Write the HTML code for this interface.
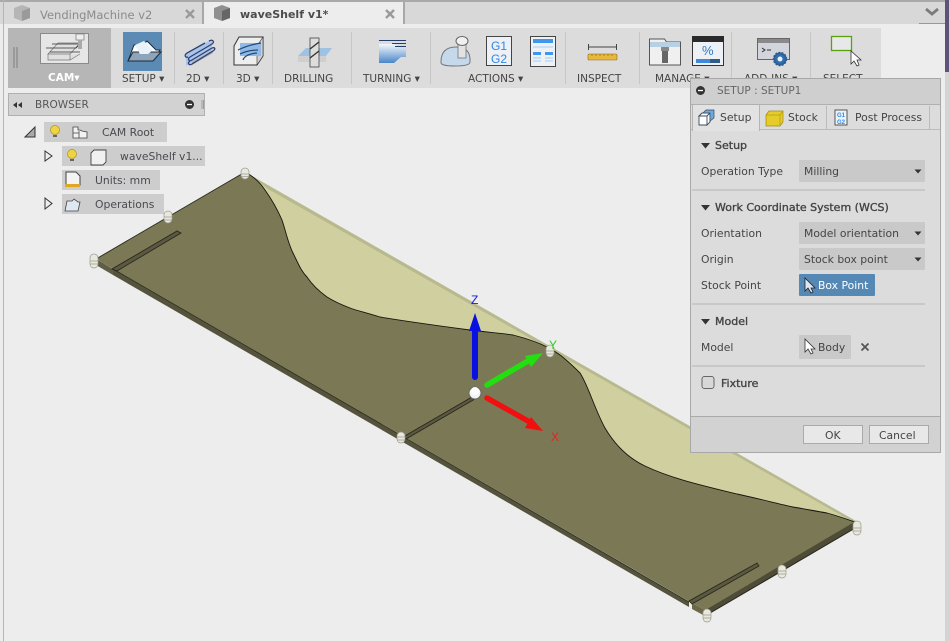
<!DOCTYPE html>
<html><head><meta charset="utf-8"><style>
html,body{margin:0;padding:0;background:#ededed}
#r{position:relative;width:949px;height:641px;overflow:hidden;background:#ededed;font-family:"DejaVu Sans","Liberation Sans",sans-serif;font-size:10.8px;color:#4a4a50}
#r div,#r span.t{position:absolute;white-space:nowrap}
.t{line-height:14px}
.lab{font-size:10.5px;color:#444;text-align:center}
.b{font-weight:bold}
.h{font-size:11px;color:#444;-webkit-text-stroke:.35px #444}
.sel{background:#c9c9c9;height:22px;left:799px;width:126px;border-radius:1px}
.sep{background:#c8c8c8;height:2px;left:692px;width:233px}
.tv{background:#cdcdcd;height:20px}
.tb{width:1px;top:32px;height:52px;background:#c6c6c6}
svg{position:absolute;left:0;top:0}
</style></head><body><div id="r">
<!-- tab bar -->
<div style="left:0;top:0;width:949px;height:2px;background:#a9a9a9"></div>
<div style="left:0;top:2px;width:945px;height:22px;background:#d8d8d8"></div>
<div style="left:204px;top:2px;width:199px;height:22px;background:#ededed"></div>
<div style="left:202px;top:2px;width:2px;height:22px;background:#a8a8a8"></div>
<div style="left:403px;top:2px;width:2px;height:22px;background:#a8a8a8"></div>
<div style="left:3px;top:0;width:1px;height:641px;background:#b5b5b5"></div>
<div style="left:945px;top:0;width:4px;height:72px;background:#5f5278"></div>
<div style="left:945px;top:72px;width:4px;height:569px;background:#d4d4d4"></div>
<div style="left:919px;top:23px;width:26px;height:1px;background:#999"></div>
<span class="t" style="left:40px;top:8px;font-size:11.5px;color:#8b8b8b">VendingMachine v2</span>
<span class="t b" style="left:240px;top:8px;font-size:11px;color:#4c4c4c">waveShelf v1*</span>
<!-- toolbar -->
<div style="left:8px;top:28px;width:873px;height:60px;background:#dcdcdc"></div>
<div style="left:8px;top:28px;width:103px;height:60px;background:#b6b6b6"></div>
<div style="left:123px;top:32px;width:39px;height:39px;background:#5b8ab5"></div>
<div class="tb" style="left:174px"></div><div class="tb" style="left:223px"></div><div class="tb" style="left:272px"></div>
<div class="tb" style="left:351px"></div><div class="tb" style="left:430px"></div><div class="tb" style="left:565px"></div>
<div class="tb" style="left:639px"></div><div class="tb" style="left:731px"></div><div class="tb" style="left:810px"></div>
<span class="t b" style="left:48px;top:71px;font-size:10.5px;color:#fff">CAM▾</span>
<span class="t lab" style="left:122px;top:72px">SETUP ▾</span>
<span class="t lab" style="left:186px;top:72px">2D ▾</span>
<span class="t lab" style="left:236px;top:72px">3D ▾</span>
<span class="t lab" style="left:284px;top:72px">DRILLING</span>
<span class="t lab" style="left:363px;top:72px">TURNING ▾</span>
<span class="t lab" style="left:468px;top:72px">ACTIONS ▾</span>
<span class="t lab" style="left:577px;top:72px">INSPECT</span>
<span class="t lab" style="left:655px;top:72px">MANAGE ▾</span>
<span class="t lab" style="left:744px;top:72px">ADD-INS ▾</span>
<span class="t lab" style="left:823px;top:72px">SELECT</span>
<!-- browser -->
<div style="left:8px;top:93px;width:197px;height:23px;background:#d2d2d2;border:1px solid #b0b0b0;box-sizing:border-box"></div>
<span class="t" style="left:35px;top:98px;font-size:10.5px;color:#555">BROWSER</span>
<div class="tv" style="left:44px;top:122px;width:123px"></div>
<div class="tv" style="left:62px;top:146px;width:143px"></div>
<div class="tv" style="left:62px;top:170px;width:98px"></div>
<div class="tv" style="left:62px;top:194px;width:102px"></div>
<span class="t" style="left:102px;top:126px;font-size:10.8px">CAM Root</span>
<span class="t" style="left:120px;top:150px;font-size:10.8px">waveShelf v1...</span>
<span class="t" style="left:95px;top:174px;font-size:10.8px">Units: mm</span>
<span class="t" style="left:95px;top:198px;font-size:10.8px">Operations</span>

<svg width="949" height="641" viewBox="0 0 949 641" fill="none">
<defs>
<linearGradient id="tg" x1="0" y1="0" x2="0" y2="1"><stop offset="0" stop-color="#f4f8fc"/><stop offset="1" stop-color="#4a86c8"/></linearGradient>
<linearGradient id="dg" x1="0" y1="0" x2="0" y2="1"><stop offset="0" stop-color="#f2f6fa"/><stop offset="1" stop-color="#a8c4e0"/></linearGradient>
</defs>
<!-- model -->
<path d="M245 172 L855 521 L705 609 L97 259 Z" fill="#cfcf9f"/>
<path d="M245 172 L856 521 L851 521 L268 189 Z" fill="#b9b98f"/>
<path d="M96 259 L245 172 Q257 178 265 190 Q275 204 282 220 C286 232 288 243 293 253 C298 263 301 271 307 277 C313 286 320 292 327 297 C335 302 342 305 350 308 C358 311 364 312 380 317 C410 322 440 326 470 330 C485 332 500 333 513 335 C525 338 537 342 547 347 C553 350 556 352 560 355 C568 361 574 367 580 373 C588 385 595 410 605 428 C615 445 628 458 645 466 C670 478 700 485 737 494 C760 499 775 503 793 507 C805 509 815 511 827 513 C838 516 846 519 855 522 L705 610 L692 603 Z" fill="#7b7955"/>
<path d="M245 172 Q257 178 265 190 Q275 204 282 220 C286 232 288 243 293 253 C298 263 301 271 307 277 C313 286 320 292 327 297 C335 302 342 305 350 308 C358 311 364 312 380 317 C410 322 440 326 470 330 C485 332 500 333 513 335 C525 338 537 342 547 347 C553 350 556 352 560 355 C568 361 574 367 580 373 C588 385 595 410 605 428 C615 445 628 458 645 466 C670 478 700 485 737 494 C760 499 775 503 793 507 C805 509 815 511 827 513 C838 516 846 519 855 522" stroke="#15150e" stroke-width=".9"/>
<path d="M245 172 L96 259" stroke="#2a2a1c" stroke-width=".9"/>
<!-- front thickness -->
<path d="M96 259 L96 265 L113 275 L113 269 Z" fill="#5f5d44"/>
<path d="M113 269 L113 275 L689 607 L689 602 Z" fill="#55533b"/>
<path d="M113 269 L689 602" stroke="#2b2a1d" stroke-width=".8"/>
<path d="M692 603 L692 609 L705 616 L705 610 Z" fill="#6a6848"/>
<path d="M705 616 L857 527 L856 521 L705 610 Z" fill="#4e4c36"/>
<path d="M705 616 L857 527" stroke="#26251a" stroke-width="1"/>
<path d="M112 269 L177 231 L181 233 L117 271 Z" fill="#5a5840" stroke="#25241a" stroke-width=".8"/>
<path d="M403 437 L472 397 L475 399 L406 439 Z" fill="#5a5840" stroke="#25241a" stroke-width=".8"/>
<path d="M689 601 L757 563 L759 566 L692 604 Z" fill="#5a5840" stroke="#25241a" stroke-width=".8"/>
<!-- pegs -->
<g fill="#e8e8dc" stroke="#9a9a90" stroke-width=".7">
<g transform="translate(245,173)"><rect x="-4" y="-5" width="8" height="11" rx="4"/><path d="M-4 1h8M-4 3.500h8"/></g>
<g transform="translate(168,217)"><rect x="-4" y="-6" width="8" height="12" rx="4"/><path d="M-4 0h8M-4 3h8"/></g>
<g transform="translate(94,261)"><rect x="-4" y="-7" width="8" height="14" rx="4"/><path d="M-4 0h8M-4 3h8"/></g>
<g transform="translate(401,437)"><rect x="-4" y="-5" width="8" height="11" rx="4"/><path d="M-4 0h8M-4 3h8"/></g>
<g transform="translate(550,351)"><rect x="-4" y="-6" width="8" height="12" rx="4"/><path d="M-4 0h8M-4 3h8"/></g>
<g transform="translate(782,571)"><rect x="-4" y="-6" width="8" height="13" rx="4"/><path d="M-4 0h8M-4 3h8"/></g>
<g transform="translate(707,615)"><rect x="-4" y="-6" width="8" height="13" rx="4"/><path d="M-4 0h8M-4 3h8"/></g>
<g transform="translate(857,527)"><rect x="-4" y="-6" width="8" height="14" rx="4"/><path d="M-4 1h8M-4 4h8"/></g>
</g>
<!-- triad -->
<path d="M475 377 V330" stroke="#0a10e0" stroke-width="6" stroke-linecap="round"/>
<path d="M475 313 L481 331 H469 Z" fill="#0a10e0"/>
<path d="M487 385 L528 361" stroke="#22e010" stroke-width="5.500" stroke-linecap="round"/>
<path d="M543 353 L525 356 L531 367 Z" fill="#22e010"/>
<path d="M487 398 L528 421" stroke="#f01010" stroke-width="5.500" stroke-linecap="round"/>
<path d="M543 431 L531 417 L525 428 Z" fill="#f01010"/>
<circle cx="475" cy="393" r="6" fill="#f4f4f4" stroke="#666" stroke-width="1"/>
<circle cx="475" cy="391" r="4" fill="#fff"/>
<text x="471" y="304" font-family="Liberation Sans" font-size="12" fill="#1418e8">Z</text>
<text x="549" y="349" font-family="Liberation Sans" font-size="12" fill="#30d020">Y</text>
<text x="551" y="441" font-family="Liberation Sans" font-size="12" fill="#e82020">X</text>

<!-- tabs icons -->
<path d="M14 8l8-3 8 3v10l-8 3-8-3z" fill="#b5b5b5"/><path d="M22 11l8-3v10l-8 3z" fill="#9a9a9a"/>
<path d="M186 10l8 8M194 10l-8 8" stroke="#9a9a9a" stroke-width="2.400"/>
<path d="M214 8l8-3 8 3v10l-8 3-8-3z" fill="#8f8f8f"/><path d="M222 11l8-3v10l-8 3z" fill="#666"/>
<path d="M386 10l8 8M394 10l-8 8" stroke="#9a9a9a" stroke-width="2.400"/>
<path d="M926 9l6 5 6-5" stroke="#7c7c7c" stroke-width="2.800"/>
<!-- grip -->
<path d="M14 47v21M17 47v21" stroke="#888" stroke-width="1.200"/>
<!-- CAM icon -->
<rect x="40.500" y="33.500" width="48" height="30" fill="#e6e6e6" stroke="#8a8a8a"/>
<path d="M48 54l10-11h22l-10 11zM48 54v6h22l10-6M70 54v6" fill="#e0e0e0" stroke="#777" stroke-width=".7"/>
<path d="M46 48h30l3-3M52 44h28M50 52h30" stroke="#333" stroke-width=".8"/>
<rect x="76" y="34" width="8" height="6" fill="#eee" stroke="#777" stroke-width=".7"/><rect x="78" y="40" width="4" height="9" fill="#aaa"/>
<!-- setup icon -->
<path d="M128 61l6-16h9l4-4 9 9h4l-8 11z" fill="#fff" stroke="#1d2a3a"/>
<path d="M128 61l5-9h28l-8 9z" fill="#8ea4b8" stroke="#1d2a3a"/>
<path d="M135 45l9-4 9 9-5 4h-8z" fill="#e8f2fb"/>
<!-- 2D -->
<path d="M186 54l26-15v12l-26 15z" fill="#a9c6e6"/>
<path d="M192 62l21-12v3l-21 12z" fill="#aaa"/>
<path d="M209 41c4-2 6 1 3 3L190 57c-3 2-1 5 2 3l20-12" stroke="#2e3f78" stroke-width="1.300"/>
<path d="M205 43L187 53c-3 2-2 5 1 4" stroke="#2e3f78" stroke-width="1.300"/>
<path d="M212 48c3-1 4 1 1 3L192 64c-3 2-5-1-2-3" stroke="#2e3f78" stroke-width="1.300"/>
<!-- 3D -->
<path d="M234 46l5-9h24v19l-6 9h-23z" fill="#eee" stroke="#333"/>
<path d="M257 46l6-9v19l-6 9z" fill="#d0d0d0" stroke="#333" stroke-width=".6"/>
<path d="M240 43h21v13h-21z" fill="#8fb9e6"/>
<path d="M238 50q10-5 23-7M240 54q8-4 18-4M243 60q2-6 14-7" stroke="#244878" stroke-width="1.200"/>
<!-- drilling -->
<path d="M298 56l8-8h26l-6 8z" fill="#9ec2e2"/><path d="M298 56h28v6h-28z" fill="#cfcfcf"/>
<rect x="310" y="38" width="9" height="29" fill="#ddd" stroke="#444" stroke-width=".8"/>
<path d="M310 49l9-7M310 58l9-7" stroke="#333" stroke-width="1.400"/>
<!-- turning -->
<path d="M379 44h15l7 4h5v9h-5l-7 6h-15z" fill="url(#tg)"/>
<path d="M379 40.500h27M392 43.500h14M395 46.500h11" stroke="#243e6e" stroke-width="1"/>
<!-- actions -->
<path d="M441 62q0-15 15-15t14 15q0 4-15 4t-14-4z" fill="#c5d8ec" stroke="#777"/>
<rect x="458" y="43" width="8" height="15" fill="#e2e2e2" stroke="#666" stroke-width=".7"/>
<ellipse cx="462" cy="41" rx="6" ry="4.500" fill="#f0f0f0" stroke="#666"/>
<rect x="486.500" y="36.500" width="25" height="29" fill="#edf1f5" stroke="#444"/>
<rect x="530.500" y="36.500" width="25" height="30" fill="#edf1f5" stroke="#444"/>
<path d="M533 39h20v4h-20zM533 52h8v3h-8zM545 52h8v3h-8z" fill="#3f97ec"/>
<path d="M533 47h20M533 58h8M545 58h8M533 61h8M545 61h8" stroke="#a5d0f2"/>
<text x="491" y="50" font-family="Liberation Sans" font-size="12" fill="#2f86e4">G1</text>
<text x="491" y="63" font-family="Liberation Sans" font-size="12" fill="#2f86e4">G2</text>
<!-- inspect -->
<path d="M588.500 44v6M616.500 44v6M589 47h28" stroke="#444" stroke-width="1"/>
<rect x="588" y="54" width="29" height="6" rx="1" fill="#e8b83c" stroke="#8a6d1f" stroke-width=".6"/>
<path d="M592 54v2M596 54v2M600 54v2M604 54v2M608 54v2M612 54v2" stroke="#8a6d1f" stroke-width=".7"/>
<!-- manage -->
<path d="M649.500 65v-26h15l2 3h14v23z" fill="#f0f0f0" stroke="#555"/>
<path d="M650 42h30v5h-30z" fill="#b8d0e4"/>
<rect x="661" y="47" width="8" height="4" fill="#888"/><rect x="662" y="51" width="6" height="12" fill="#666"/>
<rect x="692.500" y="36.500" width="31" height="29" fill="#edf1f5" stroke="#333"/>
<rect x="692" y="36" width="32" height="6" fill="#2a2a2a"/>
<path d="M696 59h14v4h-14z" fill="#3f89dc"/><path d="M710 59h10v4h-10z" fill="#2f5c88"/>
<text x="702" y="55" font-family="Liberation Sans" font-size="13" fill="#2f78c8">%</text>
<!-- add-ins -->
<rect x="757.500" y="38.500" width="32" height="21" fill="#d2d6dc" stroke="#666"/>
<rect x="758" y="39" width="31" height="4" fill="#8a8a8a"/>
<path d="M762 48l3 2-3 2M767 50h4" stroke="#333"/>
<circle cx="780" cy="59" r="6.500" fill="#2f5e92" stroke="#2f5e92" stroke-width="1.500" stroke-dasharray="2 1.200"/>
<circle cx="780" cy="59" r="5" fill="#2f6eb0"/><circle cx="780" cy="59" r="2.500" fill="#e8f0f8"/>
<!-- select -->
<rect x="831.500" y="36.500" width="20" height="14" stroke="#5aa010" stroke-width="1.300" fill="#e8e8e8"/>
<path d="M851 51v13l3-3 3 5 2-1-2-5h4z" fill="#fff" stroke="#333" stroke-width=".8"/>
<!-- browser icons -->
<path d="M13 105l4-3v6zM18 105l4-3v6z" fill="#333"/>
<circle cx="189.500" cy="104.500" r="4.500" fill="#333"/><path d="M187 104.500h5" stroke="#fff" stroke-width="1.300"/>
<path d="M202 100v9M203.500 100v9" stroke="#888" stroke-width=".7"/>
<path d="M25 137l10-10v10z" fill="#aaa" stroke="#333"/>
<path d="M45 151l7 5-7 5z" stroke="#333" fill="#eee"/>
<path d="M45 198l7 5.500-7 5.500z" stroke="#333" fill="#eee"/>
<g fill="#f0d340" stroke="#b09420" stroke-width=".7"><circle cx="55" cy="130" r="4.500"/><circle cx="72" cy="154" r="4.500"/></g>
<path d="M53 136h4M70 160h4" stroke="#666" stroke-width="2"/>
<path d="M73 138v-11h5v3h2l2 1 5 1v6z" fill="#f2f2f2" stroke="#444" stroke-width=".8"/><path d="M79 131v7M73 133h6" stroke="#444" stroke-width=".8"/>
<path d="M91 153l3-3h12v12l-3 3H91z" fill="#f0f0f0" stroke="#444" stroke-width=".9"/>
<path d="M66 172h10l4 4v9H66z" fill="#f4f4f4" stroke="#444"/><rect x="65" y="184" width="15" height="3" fill="#e0a820"/>
<path d="M65 211l2-10h5l2-2 4 3h2l-2 9z" fill="#dfe8f0" stroke="#444" stroke-width=".8"/>
</svg>

<!-- dialog -->
<div style="left:690px;top:78px;width:251px;height:375px;background:#dcdcdc;border:1px solid #a8a8a8;box-sizing:border-box"></div>
<div style="left:691px;top:79px;width:249px;height:25px;background:#cfcfcf"></div>
<div style="left:691px;top:104px;width:249px;height:1px;background:#b0b0b0"></div>
<div style="left:691px;top:129px;width:249px;height:1px;background:#bbb"></div>
<div style="left:692px;top:105px;width:68px;height:26px;background:#e2e2e2;border-left:1px solid #b5b5b5;border-right:1px solid #b5b5b5;box-sizing:border-box"></div>
<div style="left:826px;top:106px;width:1px;height:23px;background:#bbb"></div>
<div style="left:929px;top:106px;width:1px;height:23px;background:#bbb"></div>
<span class="t" style="left:717px;top:84px;font-size:10.500px;color:#666">SETUP : SETUP1</span>
<span class="t" style="left:720px;top:111px;color:#444">Setup</span>
<span class="t" style="left:788px;top:111px;color:#444">Stock</span>
<span class="t" style="left:855px;top:111px;color:#444">Post Process</span>
<span class="t h" style="left:715px;top:139px">Setup</span>
<span class="t" style="left:701px;top:165px;color:#444">Operation Type</span>
<div class="sel" style="top:160px"></div>
<span class="t" style="left:804px;top:165px;color:#444">Milling</span>
<div class="sep" style="top:189px"></div>
<span class="t h" style="left:715px;top:201px">Work Coordinate System (WCS)</span>
<span class="t" style="left:701px;top:227px;color:#444">Orientation</span>
<div class="sel" style="top:222px"></div>
<span class="t" style="left:804px;top:227px;color:#444">Model orientation</span>
<span class="t" style="left:701px;top:253px;color:#444">Origin</span>
<div class="sel" style="top:248px"></div>
<span class="t" style="left:804px;top:253px;color:#444">Stock box point</span>
<span class="t" style="left:701px;top:279px;color:#444">Stock Point</span>
<div style="left:799px;top:274px;width:76px;height:22px;background:#5588b5;border-radius:1px"></div>
<span class="t" style="left:818px;top:279px;color:#fff">Box Point</span>
<div class="sep" style="top:303px"></div>
<span class="t h" style="left:715px;top:315px">Model</span>
<span class="t" style="left:701px;top:341px;color:#444">Model</span>
<div style="left:799px;top:335px;width:52px;height:24px;background:#c9c9c9;border-radius:1px"></div>
<span class="t" style="left:818px;top:341px;color:#444">Body</span>
<div class="sep" style="top:365px"></div>
<span class="t h" style="left:721px;top:377px">Fixture</span>
<div style="left:691px;top:416px;width:249px;height:36px;background:#d2d2d2;border-top:1px solid #aaa;box-sizing:border-box"></div>
<div style="left:803px;top:425px;width:60px;height:19px;background:#e8e8e8;border:1px solid #aaa;box-sizing:border-box"></div>
<div style="left:869px;top:425px;width:60px;height:19px;background:#e8e8e8;border:1px solid #aaa;box-sizing:border-box"></div>
<span class="t" style="left:825px;top:429px;color:#444">OK</span>
<span class="t" style="left:879px;top:429px;color:#444">Cancel</span>
<svg width="949" height="641" viewBox="0 0 949 641" fill="none" style="z-index:5">
<circle cx="700.500" cy="90.500" r="4.500" fill="#333"/><path d="M698 90.500h5" stroke="#fff" stroke-width="1.300"/>
<path d="M699 116l3-3h8l-3 3zM699 116h8v9h-8zM707 116l3-3v9l-3 3z" fill="#fff" stroke="#3a4a5a" stroke-width=".9"/><path d="M703 113l3-3h8v8l-4 3v-8z" fill="#6fa8dc" stroke="#3a4a5a" stroke-width=".7"/>
<path d="M766 115l3-4h14v11l-3 4h-14z" fill="#e6cc28" stroke="#a08a10" stroke-width=".7"/><path d="M780 115v11M766 115h14l3-4" stroke="#b09a18" stroke-width=".7"/>
<rect x="835" y="110" width="12" height="15" fill="#eef3f8" stroke="#333" stroke-width=".8"/>
<text x="837" y="117" font-family="Liberation Sans" font-size="6" font-weight="bold" fill="#2f86e4">G1</text>
<text x="837" y="124" font-family="Liberation Sans" font-size="6" font-weight="bold" fill="#2f86e4">G2</text>
<g fill="#333"><path d="M701 143h9l-4.500 5.500zM701 205h9l-4.500 5.500zM701 319h9l-4.500 5.500z"/>
<path d="M914.500 169.500h7l-3.500 4zM914.500 231.500h7l-3.500 4zM914.500 257.500h7l-3.500 4z"/></g>
<path d="M805 278v13l3-3 3 5 2-1-2-4h4z" fill="#dfe6ee" stroke="#222" stroke-width=".8"/>
<path d="M805 339v13l3-3 3 5 2-1-2-4h4z" fill="#fff" stroke="#333" stroke-width=".8"/>
<path d="M861.500 343.500l7 7M868.500 343.500l-7 7" stroke="#555" stroke-width="1.800"/>
<rect x="702" y="376.500" width="12" height="12" rx="2.500" fill="#d8d8d8" stroke="#666"/>
</svg>
</div></body></html>
